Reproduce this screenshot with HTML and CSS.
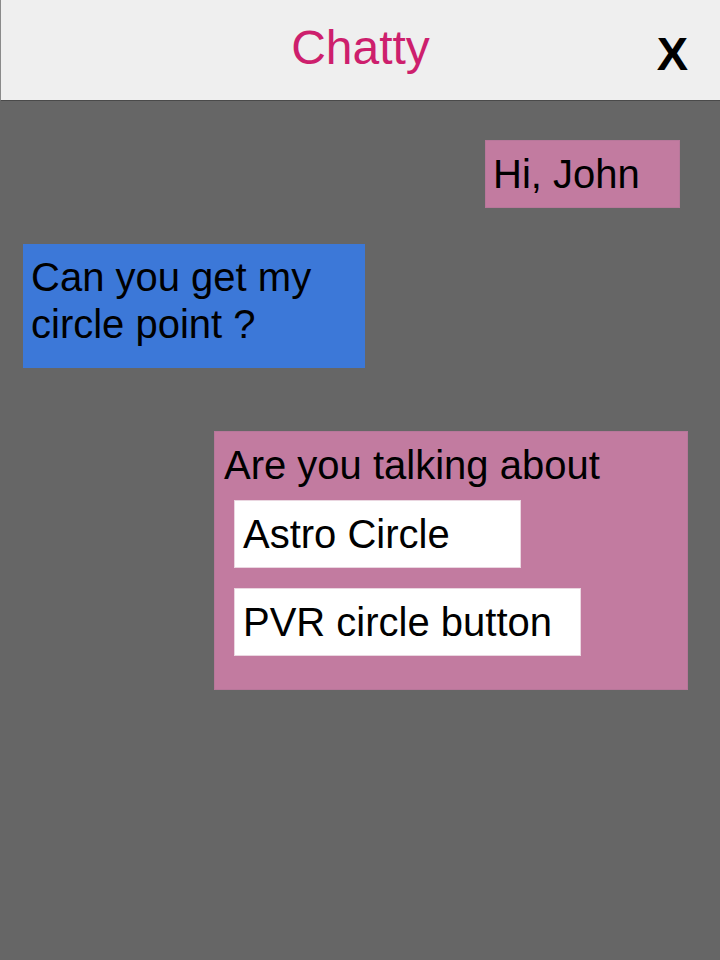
FILE: index.html
```html
<!DOCTYPE html>
<html lang="en">
<head>
<meta charset="utf-8">
<title>Chatty</title>
<link rel="stylesheet" href="styles.css">
</head>
<body>
<header class="topbar">
  <span class="spacer"></span>
  <h1 class="title">Chatty</h1>
  <button class="close" type="button">X</button>
</header>
<main class="chat">
  <div class="bubble bubble-me bubble-hi">Hi, John</div>
  <div class="bubble bubble-them bubble-question">Can you get my circle point ?</div>
  <div class="bubble bubble-me bubble-choice">
    <div class="choice-label">Are you talking about</div>
    <div class="option option-astro">Astro Circle</div>
    <div class="option option-pvr">PVR circle button</div>
  </div>
</main>
</body>
</html>
```

FILE: styles.css
```css
html, body {
  margin: 0;
  padding: 0;
}

body {
  background: #666666;
  font-family: "Liberation Sans", Arial, sans-serif;
  width: 720px;
  height: 960px;
  overflow: hidden;
}

.topbar {
  box-sizing: border-box;
  height: 101px;
  background: #efefef;
  border-left: 1px solid #8a8a8a;
  border-bottom: 1px solid #4a4a4a;
  display: grid;
  grid-template-columns: 1fr auto 1fr;
  align-items: start;
  padding-top: 20px;
}

.title {
  margin: 0;
  font-weight: normal;
  font-size: 48px;
  line-height: 55px;
  color: #cd1f6d;
}

.close {
  justify-self: end;
  margin: 6px 32px 0 0;
  padding: 0;
  border: none;
  background: none;
  font-family: inherit;
  font-weight: bold;
  font-size: 47px;
  line-height: 55px;
  color: #000;
}

.chat {
  display: flex;
  flex-direction: column;
  align-items: flex-start;
}

.bubble {
  box-sizing: border-box;
  font-size: 40px;
  line-height: 46px;
  color: #000;
}

.bubble-me {
  background: #c27ba0;
  border: 1px solid #b7779a;
}

.bubble-them {
  background: #3c78d8;
}

.bubble-hi {
  align-self: flex-end;
  margin: 39px 40px 0 0;
  width: 195px;
  padding: 10px 7px 10px;
}

.bubble-question {
  margin: 36px 0 0 23px;
  width: 342px;
  padding: 10px 8px 20px;
  line-height: 47px;
}

.bubble-choice {
  margin: 63px 0 0 214px;
  width: 474px;
  padding: 10px 9px 33px;
  display: flex;
  flex-direction: column;
  align-items: flex-start;
}

.choice-label {
  margin-bottom: 12px;
}

.option {
  box-sizing: border-box;
  background: #ffffff;
  border: 1px solid #ead6e0;
  margin-left: 10px;
  padding: 10px 8px 10px;
}

.option + .option {
  margin-top: 20px;
}

.option-astro {
  width: 287px;
}

.option-pvr {
  width: 347px;
}
```
